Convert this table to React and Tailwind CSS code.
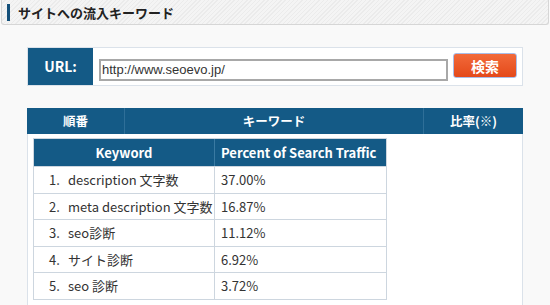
import React from "react";

const rows = [
    ["1.", "description 文字数", "37.00%"],
    ["2.", "meta description 文字数", "16.87%"],
    ["3.", "seo診断", "11.12%"],
    ["4.", "サイト診断", "6.92%"],
    ["5.", "seo 診断", "3.72%"],
];

export default function App() {
    return (
        <div className="w-[550px] h-[305px] overflow-hidden bg-[#f9f9f9] font-['Noto_Sans_CJK_JP',sans-serif]">
            {/* title bar */}
            <div className="mx-[1px] h-[25px] border-x border-b border-[#d6d6d6] rounded-b-[3px] flex items-center bg-[repeating-linear-gradient(135deg,#f4f4f4_0px,#f4f4f4_2px,#ebebeb_2px,#ebebeb_3px)]">
                <div className="ml-[5px] w-[3px] h-[17px] bg-[#14507a]" />
                <p className="ml-[8px] text-[13px] font-bold text-[#222] leading-none">サイトへの流入キーワード</p>
            </div>

            {/* url form */}
            <div className="mt-[22px] ml-[27px] w-[496px] h-[39px] flex bg-white border border-[#dbe2ea]">
                <div className="w-[65px] bg-[#145a86] flex items-center justify-center text-white font-bold text-[14px]">URL:</div>
                <div className="ml-[6px] mt-[11px] w-[349px] h-[22px] border-2 border-[#a8a8a8] bg-white flex items-center pl-[1px] text-[13px] text-[#333] font-['Liberation_Sans',sans-serif]">
                    http://www.seoevo.jp/
                </div>
                <button className="ml-[5px] mt-[5px] w-[64px] h-[25px] rounded-[3px] border border-[#a9bde8] bg-[linear-gradient(#f26a3a,#e4491a)] text-white font-bold text-[14px] leading-none">検索</button>
            </div>

            {/* outer table */}
            <div className="mt-[22px] ml-[27px] w-[496px]">
                <div className="h-[26px] bg-[#145a86] grid grid-cols-[98px_299px_99px] text-white font-bold text-[12.5px]">
                    <div className="flex items-center justify-center border-r border-[#2f6f98]">順番</div>
                    <div className="flex items-center justify-center border-r border-[#2f6f98]">キーワード</div>
                    <div className="flex items-center justify-center">比率(※)</div>
                </div>
                <div className="h-[180px] bg-white border-x border-[#dbe2ea] pt-[4px] pl-[5px]">
                    <div className="w-[354px] border border-[#cdd6df]">
                        <div className="h-[27px] bg-[#145a86] grid grid-cols-[181px_171px] text-white font-bold text-[13px]">
                            <div className="flex items-center justify-center border-r border-[#3a7aa2]">Keyword</div>
                            <div className="flex items-center pl-[6px]">Percent of Search Traffic</div>
                        </div>
                        {rows.map((r) => (
                            <div key={r[0]} className="h-[26.6px] grid grid-cols-[181px_171px] border-t border-[#cdd6df] text-[13px] text-[#333]">
                                <div className="flex items-center pl-[15px] border-r border-[#cdd6df] whitespace-nowrap">
                                    <span className="w-[19px]">{r[0]}</span>
                                    <span>{r[1]}</span>
                                </div>
                                <div className="flex items-center pl-[6px]">{r[2]}</div>
                            </div>
                        ))}
                    </div>
                </div>
            </div>
        </div>
    );
}
